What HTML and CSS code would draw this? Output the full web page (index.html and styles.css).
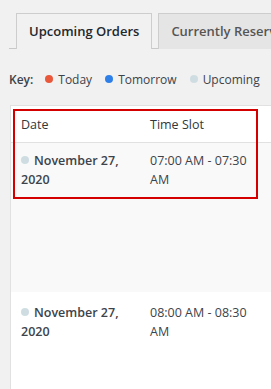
FILE: index.html
```html
<!DOCTYPE html>
<html>
<head>
<meta charset="utf-8">
<link rel="stylesheet" href="styles.css">
</head>
<body>
<div class="page">
  <nav class="tabs">
    <a class="tab active">Upcoming Orders</a>
    <a class="tab">Currently Reserved</a>
  </nav>
  <div class="key">
    <span class="key-label">Key:</span>
    <span class="key-item"><span class="dot today"></span>Today</span>
    <span class="key-item"><span class="dot tomorrow"></span>Tomorrow</span>
    <span class="key-item"><span class="dot upcoming"></span>Upcoming</span>
  </div>
  <div class="table-wrap">
    <table class="orders">
      <thead>
        <tr><th class="c-date">Date</th><th class="c-time">Time Slot</th><th class="c-rest"></th></tr>
      </thead>
      <tbody>
        <tr class="row tall">
          <td class="c-date"><span class="dot upcoming"></span><strong>November 27, 2020</strong></td>
          <td class="c-time">07:00 AM - 07:30 AM</td>
          <td class="c-rest"></td>
        </tr>
        <tr class="row alt">
          <td class="c-date"><span class="dot upcoming"></span><strong>November 27, 2020</strong></td>
          <td class="c-time">08:00 AM - 08:30 AM</td>
          <td class="c-rest"></td>
        </tr>
      </tbody>
    </table>
    <div class="highlight"></div>
  </div>
</div>
</body>
</html>
```
FILE: styles.css
```css
html, body {
  margin: 0;
  padding: 0;
  background: #f1f1f1;
  overflow: hidden;
}
body {
  font-family: "Open Sans", "Noto Sans", sans-serif;
  color: #3c434a;
  width: 271px;
  height: 389px;
}
.page {
  padding: 13px 0 0 9px;
  width: 262px;
  overflow: hidden;
}
.tabs {
  display: flex;
  border-bottom: 1px solid #c8c8c8;
  padding-left: 7px;
  gap: 6px;
  height: 35px;
  width: 400px;
}
.tab {
  display: block;
  box-sizing: border-box;
  height: 36px;
  padding: 0 12px;
  border: 1px solid #cdcdcd;
  border-bottom: none;
  background: #e5e5e5;
  color: #555;
  font-size: 13px;
  font-weight: 600;
  line-height: 35px;
  white-space: nowrap;
}
.tab.active {
  background: #f1f1f1;
  color: #23282d;
}
.key {
  display: flex;
  align-items: center;
  margin-top: 21px;
  font-size: 12px;
  color: #3c434a;
  height: 18px;
  white-space: nowrap;
}
.key-label {
  font-weight: 600;
  margin-right: 12px;
}
.key-item {
  display: flex;
  align-items: center;
  margin-right: 13px;
}
.key-item .dot {
  margin-right: 5px;
}
.dot {
  display: inline-block;
  width: 8px;
  height: 8px;
  border-radius: 50%;
}
.dot.today { background: #e9583a; }
.dot.tomorrow { background: #2f7fe8; }
.dot.upcoming { background: #cfdde2; }
.table-wrap {
  position: relative;
  margin-top: 17px;
  margin-left: 1px;
}
.orders {
  border-collapse: collapse;
  width: 380px;
  border: 1px solid #e1e1e1;
  background: #fff;
  font-size: 12.5px;
  line-height: 19px;
}
.orders th {
  text-align: left;
  font-weight: 400;
  padding: 8px 10px 8px 10px;
  height: 20px;
  border-bottom: 1px solid #e1e1e1;
  color: #32373c;
}
.orders td {
  vertical-align: top;
  padding: 8px 10px;
}
.c-date { width: 109px; }
.c-time { width: 100px; }
.row.tall td { height: 133px; background: #f9f9f9; }
.row.alt td { background: #fff; height: 80px; padding-top: 11px; }
.row .dot { margin-right: 5px; vertical-align: 1px; }
.row strong { font-weight: 600; color: #3c434a; }
.highlight {
  position: absolute;
  left: 3px;
  top: 4px;
  width: 241px;
  height: 86px;
  border: 2px solid #d40000;
}
```
